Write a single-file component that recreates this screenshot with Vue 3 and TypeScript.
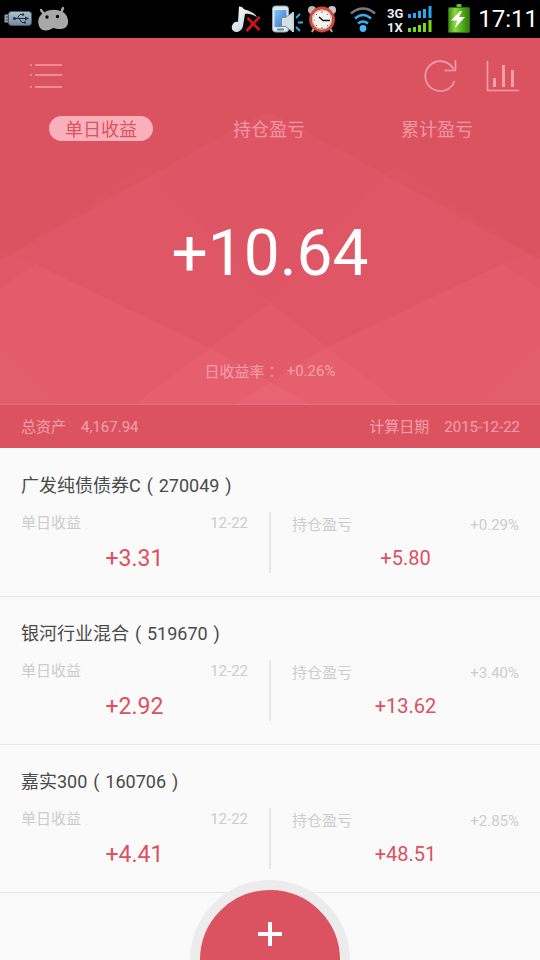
<script setup lang="ts">
import { ref } from 'vue'

interface Fund {
  name: string
  code: string
  date: string
  daily: string
  holding: string
  rate: string
}

const tabs: string[] = ['单日收益', '持仓盈亏', '累计盈亏']
const activeTab = ref(0)

const funds: Fund[] = [
  { name: '广发纯债债券C', code: '270049', date: '12-22', daily: '+3.31', holding: '+5.80', rate: '+0.29%' },
  { name: '银河行业混合', code: '519670', date: '12-22', daily: '+2.92', holding: '+13.62', rate: '+3.40%' },
  { name: '嘉实300', code: '160706', date: '12-22', daily: '+4.41', holding: '+48.51', rate: '+2.85%' },
]
</script>

<template>
  <div class="app">
    <div class="status">
      <div class="status-left">
        <svg width="30" height="18" viewBox="0 0 30 18">
          <defs>
            <linearGradient id="usb" x1="0" y1="0" x2="0" y2="1">
              <stop offset="0" stop-color="#b4c0c8" />
              <stop offset="1" stop-color="#74899a" />
            </linearGradient>
          </defs>
          <rect x="1.500" y="4.500" width="6" height="8" rx="1" fill="#8fa3b0" stroke="#3f576d" />
          <path d="M3 7h2M3 10h2" stroke="#24384a" />
          <rect x="5.500" y="1.500" width="23" height="14" rx="3" fill="url(#usb)" stroke="#3c5b78" />
          <path d="M11 8.500h12M14 8.500l3-4h3M16 8.500l3 4h3" fill="none" stroke="#1f3346" />
          <circle cx="11.500" cy="8.500" r="1.600" fill="#1f3346" />
          <path d="M22 6.500l4 2-4 2z" fill="#1f3346" />
          <circle cx="20" cy="4.500" r="1.200" fill="#1f3346" />
          <rect x="21" y="11.500" width="2" height="2" fill="#1f3346" />
        </svg>
        <svg width="32" height="26" viewBox="0 0 32 26">
          <path d="M4 4l3 4M26 2l-2 5" stroke="#a8a8a8" stroke-width="2.400" stroke-linecap="round" />
          <path d="M6 7Q15 1 26 6C31 9 33 17 29 21C26 24 20 23 16 22C12 25 4 26 2 20C0 14 2 10 6 7Z" fill="#a8a8a8" />
          <circle cx="10" cy="11" r="1.700" fill="#050505" />
          <circle cx="20.500" cy="10.500" r="1.700" fill="#050505" />
        </svg>
      </div>
      <div class="status-right">
        <svg width="308" height="38" viewBox="0 0 308 38">
          <defs>
            <linearGradient id="silver" x1="0" y1="0" x2="1" y2="1">
              <stop offset="0" stop-color="#ffffff" />
              <stop offset="1" stop-color="#b7c9d2" />
            </linearGradient>
            <linearGradient id="screen" x1="0" y1="0" x2="1" y2="1">
              <stop offset="0" stop-color="#8cc2f2" />
              <stop offset="1" stop-color="#2b78c9" />
            </linearGradient>
            <linearGradient id="cell" x1="0" y1="0" x2="1" y2="0">
              <stop offset="0" stop-color="#3c8d10" />
              <stop offset="0.300" stop-color="#8fd843" />
              <stop offset="0.600" stop-color="#58b51c" />
              <stop offset="1" stop-color="#2f7a0a" />
            </linearGradient>
          </defs>
          <!-- muted note -->
          <path d="M9 6.500l3 0.500c2 4 11 3 15 10-5-3-9-4-12-3l-2 12c-1 4-4 6-7 6s-5-3-4-6 3-5 6-4z" fill="url(#silver)" />
          <path d="M17.500 18l12 12M29.500 17L16.500 31" stroke="#d3131c" stroke-width="2.600" />
          <!-- phone with speaker -->
          <rect x="42.500" y="6" width="16" height="26" rx="3" fill="#dfe8ee" stroke="#8fa7b8" />
          <rect x="44.500" y="10" width="12" height="17" fill="url(#screen)" />
          <rect x="47" y="28.500" width="7" height="2" rx="1" fill="#6b8291" />
          <path d="M51.500 17.500h4l7-5v19l-7-5h-4z" fill="#d7dee3" stroke="#7c8d99" />
          <path d="M63 12v20" stroke="#c7d3da" stroke-width="2" />
          <path d="M66 18l4-4M68 22.500h5M66 27l4 4" stroke="#22b7ee" stroke-width="1.800" />
          <!-- alarm clock -->
          <circle cx="82" cy="10" r="4" fill="#b8b8b8" />
          <circle cx="102" cy="10" r="4" fill="#c8c8c8" />
          <path d="M84 28l-2 4M100 28l2 4" stroke="#aaa" stroke-width="2" />
          <circle cx="92" cy="19.500" r="11.500" fill="#fff" stroke="#d94734" stroke-width="2.800" />
          <circle cx="92" cy="19.500" r="9.500" fill="#f4f3ef" stroke="#9a9a9a" stroke-width="0.700" />
          <path d="M89 17l4 3.500h7" fill="none" stroke="#181818" stroke-width="1.600" />
          <path d="M92 11v2M92 27v2M84 20h1M86 14l1 1M86 26l1-1M98 26l-1-1M98 14l-1 1" stroke="#777" />
          <!-- wifi -->
          <path d="M121 13.500q12-10 24 0" fill="none" stroke="#777b80" stroke-width="2.500" />
          <path d="M125 18.500q8-7 16 0M128 23.500q5-4 10 0" fill="none" stroke="#34aeee" stroke-width="2.600" />
          <circle cx="133" cy="28.500" r="3.400" fill="#4db7f4" />
          <!-- network -->
          <text class="net" x="157" y="18">3G</text>
          <text class="net" x="157" y="32">1X</text>
          <path d="M179.500 18v-4M184.500 18v-5M189.500 18v-7M194.500 18v-9M200 18v-12" stroke="#27a8f2" stroke-width="3" />
          <path d="M179.500 32v-4M184.500 32v-5M189.500 32v-7M194.500 32v-9M200 32v-12" stroke="#79dc13" stroke-width="3" />
          <!-- battery -->
          <rect x="226.500" y="4" width="5" height="4" rx="1" fill="#6fb832" />
          <rect x="218.500" y="7.500" width="21" height="25" rx="1" fill="url(#cell)" stroke="#2e6b10" />
          <path d="M230 11l-9 9.500h6l-2 7.500 10-11h-6l3-6z" fill="#fff" />
        </svg>
        <span class="clock">17:11</span>
      </div>
    </div>

    <header class="hero">
      <svg class="facets" viewBox="0 0 540 366" preserveAspectRatio="none" aria-hidden="true">
        <g fill="#ff8290">
          <path d="M262 76Q268 73 274 76L540 222V366H0V222Z" fill-opacity="0.100" />
          <path d="M145 127L270 265L400 366H0V224Z" fill-opacity="0.030" />
          <path d="M393 127L270 265L135 366H540V220Z" fill-opacity="0.030" />
          <path d="M0 212L35 226L0 250ZM540 212L503 226L540 250Z" fill-opacity="0.050" />
          <path d="M35 226L210 310L310 366H0V250Z" fill-opacity="0.120" />
          <path d="M503 226L325 310L235 366H540V250Z" fill-opacity="0.120" />
          <path d="M270 264L400 366H135Z" fill-opacity="0.080" />
          <path d="M0 310L55 366H0ZM540 308L480 366H540Z" fill-opacity="0.050" />
        </g>
      </svg>
      <div class="hero-body">
        <div class="toolbar">
          <button class="icon-btn" aria-label="菜单">
            <svg width="32" height="26" viewBox="0 0 32 26">
              <path d="M0 2h2M5 2h27M0 12h2M5 12h27M0 24h2M5 24h27" stroke="#f3a0ab" stroke-width="1.500" />
            </svg>
          </button>
          <div class="tools">
            <button class="icon-btn" aria-label="刷新">
              <svg width="34" height="34" viewBox="0 0 34 34" fill="none" stroke="#f3a0ab" stroke-width="1.600">
                <path d="M30.500 22A15 15 0 1 1 29.500 10M31.500 1v10.500H20.500" />
              </svg>
            </button>
            <button class="icon-btn" aria-label="图表">
              <svg width="34" height="32" viewBox="0 0 34 32" fill="none" stroke="#f3a0ab">
                <path d="M1.500 1v29.500h31.500" stroke-width="1.600" />
                <path d="M8.500 27v-9M17.500 27V5M26.500 27V10" stroke-width="3" />
              </svg>
            </button>
          </div>
        </div>
        <nav class="tabs">
          <button
            v-for="(tab, i) in tabs"
            :key="tab"
            class="tab"
            :class="{ active: i === activeTab }"
            @click="activeTab = i"
          >{{ tab }}</button>
        </nav>
        <div class="total">+10.64</div>
        <div class="rate"><span class="rate-label">日收益率：</span><span>+0.26%</span></div>
      </div>
      <div class="summary">
        <div class="pair"><span>总资产</span><span>4,167.94</span></div>
        <div class="pair"><span>计算日期</span><span>2015-12-22</span></div>
      </div>
    </header>

    <main class="list">
      <article v-for="fund in funds" :key="fund.code" class="fund">
        <h2 class="title">{{ fund.name }}<span class="paren">(</span>{{ fund.code }}<span class="paren">)</span></h2>
        <div class="cols">
          <section class="col daily">
            <div class="meta"><span>单日收益</span><span>{{ fund.date }}</span></div>
            <div class="value">{{ fund.daily }}</div>
          </section>
          <section class="col holding">
            <div class="meta"><span>持仓盈亏</span><span>{{ fund.rate }}</span></div>
            <div class="value">{{ fund.holding }}</div>
          </section>
        </div>
      </article>
    </main>

    <button class="add" aria-label="添加">
      <svg width="24" height="24" viewBox="0 0 24 24" stroke="#fff" stroke-width="4">
        <path d="M12 0v24M0 12h24" />
      </svg>
    </button>
  </div>
</template>

<style>
body {
  margin: 0;
  background: #fafafa;
}
</style>

<style scoped>
.app {
  position: relative;
  min-height: 100vh;
  overflow: hidden;
  background: #fafafa;
  font-family: Roboto, "Noto Sans CJK SC", sans-serif;
}
button {
  margin: 0;
  padding: 0;
  border: 0;
  background: none;
  font: inherit;
  cursor: pointer;
}
svg {
  display: block;
}
.status {
  display: flex;
  justify-content: space-between;
  height: 38px;
  padding: 0 2px 0 3px;
  background: #000;
}
.status-left,
.status-right {
  display: flex;
  align-items: center;
}
.status-left {
  gap: 4px;
}
.status-right {
  position: relative;
}
.clock {
  position: absolute;
  right: 0;
  color: #fff;
  font-size: 24px;
  line-height: 40px;
}
.net {
  fill: #e8edf5;
  font-size: 13px;
  font-weight: 700;
}
.hero {
  position: relative;
  background: #db5261;
  color: #f5a0ab;
}
.facets {
  position: absolute;
  top: 0;
  left: 0;
  width: 100%;
  height: 366px;
}
.hero-body {
  position: relative;
  display: flex;
  flex-direction: column;
  height: 366px;
}
.toolbar {
  display: flex;
  align-items: center;
  justify-content: space-between;
  padding: 20px 20px 0 30px;
  height: 36px;
}
.tools {
  display: flex;
  align-items: center;
  gap: 28px;
}
.tabs {
  display: grid;
  grid-template-columns: repeat(3, 1fr);
  justify-items: center;
  margin-top: 22px;
  padding: 0 19px 0 17px;
}
.tab {
  padding: 2px 16px 0;
  border-radius: 13px;
  color: #f298a4;
  font-size: 18px;
  line-height: 23px;
}
.tab.active {
  background: #f9b0ba;
  color: #db5261;
}
.total {
  margin-top: 75px;
  color: #fff;
  font-size: 64px;
  line-height: 76px;
  text-align: center;
}
.rate {
  display: flex;
  justify-content: center;
  gap: 7px;
  margin-top: 69px;
  font-size: 15px;
  line-height: 20px;
}
.rate-label {
  font-family: "Noto Sans CJK TC", sans-serif;
}
.summary {
  position: relative;
  display: flex;
  justify-content: space-between;
  padding: 1px 20px 0 21px;
  border-top: 1px solid #e1707c;
  background: #db5261;
  font-size: 15px;
  line-height: 42px;
}
.pair {
  display: flex;
  gap: 15px;
}
.list {
  padding-top: 1px;
}
.fund {
  height: 147px;
  border-bottom: 1px solid #e6e6e6;
}
.title {
  margin: 0;
  padding: 24px 21px 0;
  color: #4a4a4a;
  font-size: 18px;
  font-weight: 400;
  line-height: 26px;
}
.paren {
  display: inline-block;
  width: 18px;
  text-align: center;
}
.cols {
  display: grid;
  grid-template-columns: 1fr 1fr;
  padding-top: 13px;
}
.col {
  height: 61px;
}
.daily {
  padding: 0 21px;
  border-right: 1px solid #e8e8e8;
}
.holding {
  padding: 0 21px;
  border-left: 1px solid #e8e8e8;
}
.meta {
  display: flex;
  justify-content: space-between;
  color: #cccccc;
  font-size: 15px;
  line-height: 22px;
}
.holding .meta {
  padding-top: 2px;
}
.value {
  color: #dc5061;
  text-align: center;
}
.daily .value {
  margin-top: 11px;
  font-size: 23px;
  line-height: 28px;
}
.holding .value {
  margin-top: 8px;
  font-size: 20px;
  line-height: 28px;
}
.add {
  position: absolute;
  bottom: -80px;
  left: 50%;
  display: flex;
  justify-content: center;
  box-sizing: border-box;
  width: 160px;
  height: 160px;
  margin-left: -80px;
  padding-top: 32px;
  border: 10px solid #ececec;
  border-radius: 50%;
  background: #db5261;
}
</style>
